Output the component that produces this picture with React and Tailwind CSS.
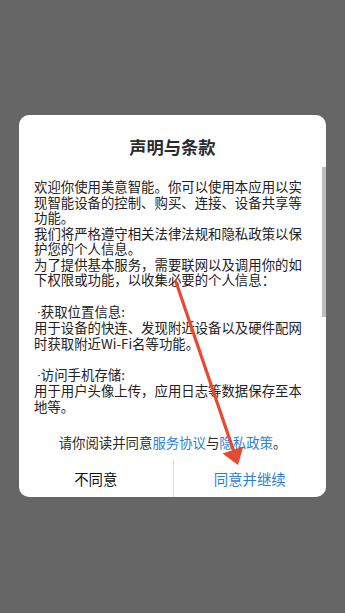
import React from "react";

function Dot() {
  return <span className="font-['Roboto',sans-serif]">{" ·"}</span>;
}

export default function App() {
  return (
    <div className="relative h-[613px] w-full overflow-hidden bg-[#666666] px-[19px] pt-[115px] font-['Noto_Sans_CJK_SC','Noto_Sans',sans-serif]">
      <div className="relative w-full overflow-hidden rounded-[10px] bg-white">
        <div className="h-[52px] pt-[21px] text-center text-[17.25px] font-bold leading-[22px] text-[#2b2b2b]">
          声明与条款
        </div>
        <div className="relative h-[255px] overflow-hidden px-[15px] pt-[12px]">
          <div className="whitespace-pre-wrap text-[13.4px] leading-[15.57px] text-[#222222]">
            {`欢迎你使用美意智能。你可以使用本应用以实现智能设备的控制、购买、连接、设备共享等功能。
我们将严格遵守相关法律法规和隐私政策以保护您的个人信息。
为了提供基本服务，需要联网以及调用你的如下权限或功能，以收集必要的个人信息：

`}
            <Dot />
            {`获取位置信息:
用于设备的快连、发现附近设备以及硬件配网时获取附近Wi-Fi名等功能。

`}
            <Dot />
            {`访问手机存储:
用于用户头像上传，应用日志等数据保存至本地等。`}
          </div>
          <div className="absolute right-0 top-0 h-[150px] w-[4px] bg-[#bdbdbd]" />
        </div>
        <div className="pt-[11px] text-center text-[13.4px] leading-[18px] text-[#2a2a2a]">
          请你阅读并同意<span className="text-[#2f7fd0]">服务协议</span>与
          <span className="text-[#2f7fd0]">隐私政策</span>。
        </div>
        <div className="mt-[9px] grid h-[37px] grid-cols-2">
          <div className="flex items-center justify-center text-[14.4px] text-[#111111]">
            不同意
          </div>
          <div className="flex items-center justify-center border-l border-[#dddddd] text-[14.4px] text-[#2f7fd0]">
            同意并继续
          </div>
        </div>
      </div>
      <svg
        className="pointer-events-none absolute left-0 top-0"
        width="345"
        height="613"
        viewBox="0 0 345 613"
      >
        <line
          x1="176"
          y1="282"
          x2="234"
          y2="452"
          stroke="#e84a2f"
          strokeWidth="3.2"
          strokeLinecap="round"
        />
        <polygon points="238,465 243.3,446.5 222.5,453.5" fill="#e84a2f" />
      </svg>
    </div>
  );
}
